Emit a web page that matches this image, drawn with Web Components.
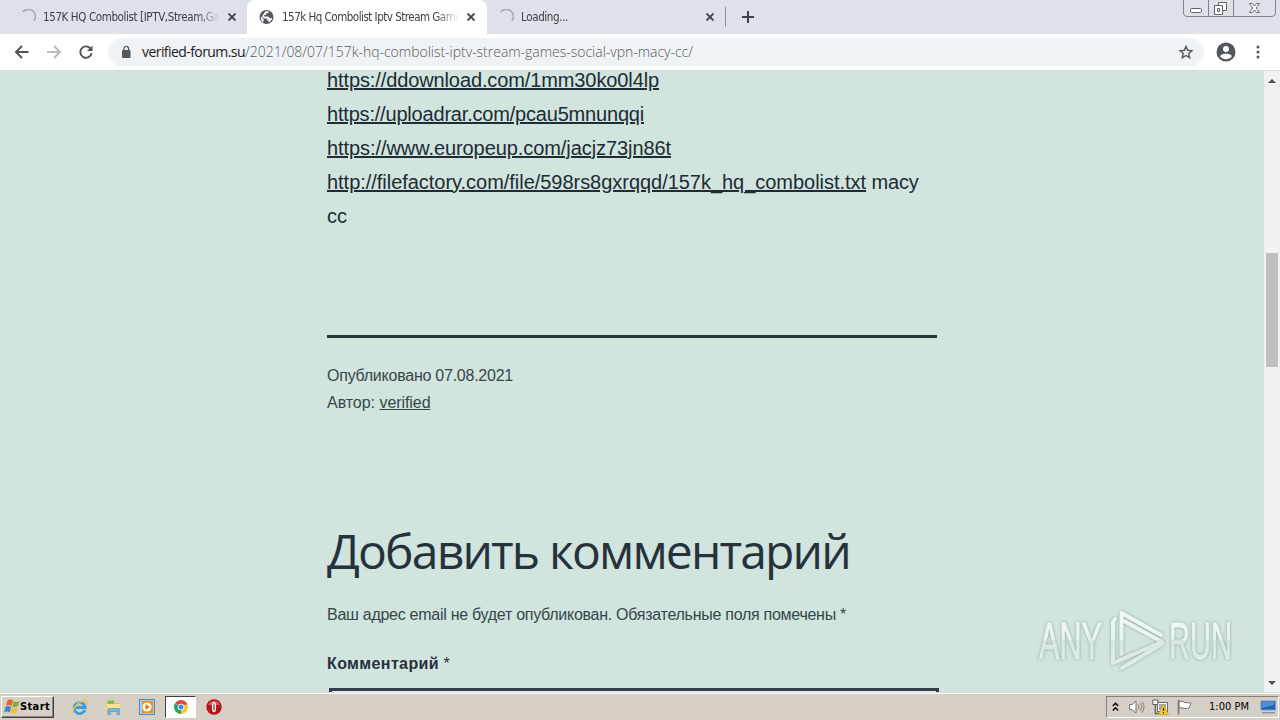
<!DOCTYPE html>
<html lang="ru">
<head>
<meta charset="utf-8">
<title>157k Hq Combolist</title>
<style>
  html, body { margin: 0; height: 100%; overflow: hidden; }
  body {
    display: flex;
    flex-direction: column;
    width: 1280px;
    height: 720px;
    background: #d1e4dd;
    font-family: "Liberation Sans", Arial, sans-serif;
  }
</style>
</head>
<body>
<tab-strip>
  <browser-tab state="loading" size="first"><fit-text width="186">157K HQ Combolist [IPTV,Stream,Gam</fit-text></browser-tab>
  <browser-tab state="ready" size="active"><fit-text width="184">157k Hq Combolist Iptv Stream Games</fit-text></browser-tab>
  <browser-tab state="loading" size="last"><fit-text width="47">Loading...</fit-text></browser-tab>
</tab-strip>
<address-bar>
  <fit-text slot="host" width="103">verified-forum.su</fit-text>
  <fit-text slot="path" width="448">/2021/08/07/157k-hq-combolist-iptv-stream-games-social-vpn-macy-cc/</fit-text>
</address-bar>
<page-view>
  <blog-post>
    <text-link><fit-text width="332">https://ddownload.com/1mm30ko0l4lp</fit-text></text-link><br>
    <text-link><fit-text width="317">https://uploadrar.com/pcau5mnunqqi</fit-text></text-link><br>
    <text-link><fit-text width="344">https://www.europeup.com/jacjz73jn86t</fit-text></text-link><br>
    <text-link><fit-text width="539">http://filefactory.com/file/598rs8gxrqqd/157k_hq_combolist.txt</fit-text></text-link> <fit-text width="47">macy</fit-text><br>
    <fit-text width="20">cc</fit-text>
  </blog-post>
  <post-meta>
    <fit-text slot="date" width="186">Опубликовано 07.08.2021</fit-text>
    <fit-text slot="label" width="48">Автор:</fit-text>
    <text-link slot="author"><fit-text width="51">verified</fit-text></text-link>
  </post-meta>
  <comment-form>
    <fit-text slot="title" width="523">Добавить комментарий</fit-text>
    <fit-text slot="note" width="519">Ваш адрес email не будет опубликован. Обязательные поля помечены *</fit-text>
    <fit-text slot="label" width="112">Комментарий</fit-text>
  </comment-form>
  <water-mark slot="overlay"></water-mark>
</page-view>
<task-bar>
  <fit-text slot="start" width="30">Start</fit-text>
  <fit-text slot="clock" width="40">1:00 PM</fit-text>
</task-bar>

<script>
// Spreads its text over a set width by adjusting the letter spacing.
class FitText extends HTMLElement {
  constructor() {
    super();
    this.attachShadow({ mode: "open" });
    this.shadowRoot.innerHTML = `
      <style>
        :host { display: inline; white-space: pre; }
        span { display: inline; }
      </style>
      <span><slot></slot></span>
    `.replace(/>\s+</g, "><").trim();
  }

  connectedCallback() {
    requestAnimationFrame(() => this.fit());
  }

  fit() {
    const span = this.shadowRoot.querySelector("span");
    const target = Number(this.getAttribute("width"));
    const natural = span.getBoundingClientRect().width;
    if (!target || !natural) return;
    span.style.letterSpacing = `${(target - natural) / this.textContent.length}px`;
  }
}

class TextLink extends HTMLElement {
  constructor() {
    super();
    this.attachShadow({ mode: "open" });
    this.shadowRoot.innerHTML = `<style>
      :host { display: inline; text-decoration: underline; text-decoration-skip-ink: auto; cursor: pointer; }
    </style><slot></slot>`;
  }
}

class TabStrip extends HTMLElement {
  constructor() {
    super();
    this.attachShadow({ mode: "open" });
    this.shadowRoot.innerHTML = `
      <style>
        :host { display: flex; flex: none; height: 34px; background: #dee1e8; color: #3c4043; }
        .new { display: flex; align-items: center; height: 34px; }
        .new i { width: 1px; height: 20px; background: #8d9197; }
        .new svg { margin-left: 16px; }
        .controls { margin-left: auto; margin-right: 4px; }
        svg { display: block; }
      </style>
      <slot></slot>
      <div class="new">
        <i></i>
        <svg width="12" height="12" viewBox="0 0 12 12"><path d="M6 0v12M0 6h12" stroke="#3c4043" stroke-width="2"/></svg>
      </div>
      <svg class="controls" width="93" height="18" viewBox="0 0 93 18" fill="none">
        <path d="M.5 0v13q0 3.500 3.500 3.500h85q3.500 0 3.500-3.500V0M25.500 0v16M50.500 0v16" stroke="#7f858e"/>
        <rect x="7.500" y="8.500" width="11" height="4" rx="1" fill="#fff" stroke="#5d626b"/>
        <path d="M35.500 2.500h8v8h-8z" fill="#fff" stroke="#5d626b"/>
        <path d="M31.500 5.500h8v9h-8z" fill="#fff" stroke="#5d626b"/>
        <path d="M34.500 8.500h2v3h-2z" stroke="#5d626b"/>
        <path d="M66.500 3.500h3l2 2.500 2-2.500h3l-3.200 4.500 3.200 4.500h-3l-2-2.500-2 2.500h-3l3.200-4.500z" fill="#fff" stroke="#6c7179"/>
      </svg>
    `;
  }
}

class BrowserTab extends HTMLElement {
  constructor() {
    super();
    this.attachShadow({ mode: "open" });
    const loading = this.getAttribute("state") === "loading";
    const icon = loading
      ? `<path d="M2.800 3A7 7 0 0 1 13.800 11.800" fill="none" stroke="#a5a9b0" stroke-width="1.600"/>`
      : `<circle cx="7.500" cy="8" r="7" fill="#55595e"/>
         <path d="M2 7.500 4.500 9.800v3.500C2.100 12.500 1.400 9.500 2 7.500zM6.500 2.300h3.300l-.6 2H7V6H5.100v1.600h4.200l1.200 1.500h2.600c-.3 2.200-1.700 3.700-3.500 4.300V11.500H8V9.500H5.100L3 7.300z" fill="#fff"/>`;
    this.shadowRoot.innerHTML = `
      <style>
        :host {
          display: flex;
          box-sizing: border-box;
          align-items: center;
          height: 34px;
          padding-left: 20px;
          font: 11.500px/16px "DejaVu Sans Condensed", "DejaVu Sans", sans-serif;
          font-stretch: condensed;
        }
        :host([size="first"]) { width: 247px; border-radius: 0 0 8px 0; }
        :host([size="active"]) { width: 240px; padding-left: 12px; background: #fff; border-radius: 8px 8px 0 0; }
        :host([size="last"]) { width: 238px; padding-left: 11px; }
        .icon { flex: none; margin-right: 7px; }
        .title { flex: none; width: 177px; overflow: hidden; white-space: nowrap;
          -webkit-mask: linear-gradient(90deg, #000 154px, transparent 177px); }
        .close { flex: none; margin-left: 8px; }
        :host([size="last"]) .title { width: 179px; }
        :host([size="last"]) .close { margin-left: 6px; }
      </style>
      <svg class="icon" width="16" height="16" viewBox="0 0 16 16">${icon}</svg>
      <div class="title"><slot></slot></div>
      <svg class="close" width="8" height="8" viewBox="0 0 8 8"><path d="M.5.5l7 7M7.500.5l-7 7" stroke="#3f4246" stroke-width="1.900"/></svg>
    `;
  }
}

class AddressBar extends HTMLElement {
  constructor() {
    super();
    this.attachShadow({ mode: "open" });
    this.shadowRoot.innerHTML = `
      <style>
        :host { display: flex; flex: none; box-sizing: border-box; align-items: center; height: 37px; padding-left: 14px; background: #fff; border-bottom: 1px solid #d5dedb; }
        svg { flex: none; display: block; }
        .back { margin-right: 16px; }
        .forward { margin-right: 16px; }
        .field { display: flex; box-sizing: border-box; align-items: center; width: 1096px; height: 28px; margin-left: 14px; padding: 0 10px 0 12px; border-radius: 14px; background: #f0f3f5; }
        .url { flex: 1; margin-left: 10px; font: 14px/20px "Open Sans", "Noto Sans", sans-serif; font-weight: 300; white-space: nowrap; color: #55595e; }
        .host { color: #202124; font-weight: 400; }
        .user { margin-left: 12px; }
        .menu { margin-left: 20px; }
      </style>
      <svg class="back" width="16" height="16" viewBox="0 0 16 16"><path d="M14.500 8H2.200M8 2L2 8l6 6" fill="none" stroke="#4f5358" stroke-width="1.900"/></svg>
      <svg class="forward" width="16" height="16" viewBox="0 0 16 16"><path d="M1 8h12.800M8 2l6 6-6 6" fill="none" stroke="#b9bbbe" stroke-width="1.900"/></svg>
      <svg width="16" height="16" viewBox="0 0 16 16"><path d="M12.300 4.300A5.700 5.700 0 1 0 13.600 9.300" fill="none" stroke="#4f5358" stroke-width="1.900"/><path d="M14.500 1.500v5.500H9z" fill="#4f5358"/></svg>
      <div class="field">
        <svg width="12" height="14" viewBox="0 0 12 14"><rect x="2" y="5" width="8.500" height="8" rx="1" fill="#54585d"/><path d="M3.900 5.500V3.800a2.350 2.350 0 0 1 4.700 0V5.500" fill="none" stroke="#54585d" stroke-width="1.300"/></svg>
        <div class="url"><span class="host"><slot name="host"></slot></span><slot name="path"></slot></div>
        <svg width="16" height="16" viewBox="0 0 16 16"><path d="M8 2.400l1.700 3.900 4.200.4-3.200 2.800 1 4.200L8 11.500l-3.700 2.200 1-4.200-3.200-2.800 4.200-.4z" fill="none" stroke="#54585d" stroke-width="1.400"/></svg>
      </div>
      <svg class="user" width="20" height="20" viewBox="0 0 20 20"><circle cx="10" cy="10" r="9.500" fill="#54585d"/><circle cx="10" cy="7" r="3" fill="#fff"/><path d="M4 14.200C5 12 8 11.700 10 11.700s5 .3 6 2.500c-1.500 2-3.700 3-6 3s-4.500-1-6-3z" fill="#fff"/></svg>
      <svg class="menu" width="4" height="14" viewBox="0 0 4 14" fill="#54585d"><circle cx="2" cy="2" r="1.500"/><circle cx="2" cy="7" r="1.500"/><circle cx="2" cy="12" r="1.500"/></svg>
    `;
  }
}

class PageView extends HTMLElement {
  constructor() {
    super();
    this.attachShadow({ mode: "open" });
    this.shadowRoot.innerHTML = `
      <style>
        :host { display: flex; position: relative; flex: none; height: 621px; overflow: hidden; background: #d1e4dd; color: #28303d; }
        main { box-sizing: border-box; width: 1264px; height: 621px; padding-left: 327px; overflow: hidden; }
        aside { display: flex; flex-direction: column; align-items: center; box-sizing: border-box; width: 16px; height: 621px; padding: 8px 0 7px; background: #f1f1f1; }
        .thumb { width: 12px; height: 114px; margin: 170px 0 auto; background: #bfbfbf; }
        svg { display: block; flex: none; }
      </style>
      <main><slot></slot></main>
      <aside>
        <svg width="8" height="4" viewBox="0 0 8 4"><path d="M0 4l4-4 4 4z" fill="#505050"/></svg>
        <div class="thumb"></div>
        <svg width="8" height="4" viewBox="0 0 8 4"><path d="M0 0l4 4 4-4z" fill="#505050"/></svg>
      </aside>
      <slot name="overlay"></slot>
    `;
  }
}

class BlogPost extends HTMLElement {
  constructor() {
    super();
    this.attachShadow({ mode: "open" });
    this.shadowRoot.innerHTML = `
      <style>
        :host { display: block; width: 610px; height: 272px; margin-top: -8px; border-bottom: 3px solid #28353b; font-size: 20px; line-height: 34px; white-space: nowrap; color: #202b34; }
      </style>
      <slot></slot>
    `;
  }
}

class PostMeta extends HTMLElement {
  constructor() {
    super();
    this.attachShadow({ mode: "open" });
    this.shadowRoot.innerHTML = `
      <style>
        :host { display: block; padding-top: 24px; font-size: 16px; line-height: 27px; color: #38464b; }
      </style>
      <div><slot name="date"></slot></div>
      <div><slot name="label"></slot> <slot name="author"></slot></div>
    `;
  }
}

class CommentForm extends HTMLElement {
  constructor() {
    super();
    this.attachShadow({ mode: "open" });
    this.shadowRoot.innerHTML = `
      <style>
        :host { display: block; padding-top: 104px; font-size: 16px; line-height: 27px; }
        h2 { margin: 0; font: 48px/62px "Open Sans", "Noto Sans", sans-serif; white-space: nowrap; color: #26323b; }
        p { margin: 19px 0 22px; color: #38464b; white-space: nowrap; }
        .label { font-weight: 700; }
        .area { box-sizing: border-box; width: 610px; height: 180px; margin: 11px 0 0 2px; border: 3px solid #323d49; background: #e9f3ef; }
      </style>
      <h2><slot name="title"></slot></h2>
      <p><slot name="note"></slot></p>
      <div><span class="label"><slot name="label"></slot></span> <span>*</span></div>
      <div class="area"></div>
    `;
  }
}

class WaterMark extends HTMLElement {
  constructor() {
    super();
    this.attachShadow({ mode: "open" });
    this.shadowRoot.innerHTML = `
      <style>
        :host { display: block; position: absolute; right: 30px; bottom: 14px; width: 218px; height: 74px; }
        svg { display: block; overflow: visible; filter: drop-shadow(0 0 1.500px rgba(90, 115, 108, .55)); }
        text { font-family: "Liberation Sans", Arial, sans-serif; font-size: 51px; }
      </style>
      <svg width="218" height="74" viewBox="1032 604 218 74">
        <defs>
          <linearGradient id="shine" gradientUnits="userSpaceOnUse" x1="0" y1="610" x2="0" y2="670">
            <stop offset="0" stop-color="#f0f8f5"/><stop offset=".49" stop-color="#e9f4f0"/>
            <stop offset=".5" stop-color="#d9e7e2"/><stop offset="1" stop-color="#e2eeea"/>
          </linearGradient>
        </defs>
        <g fill="url(#shine)" stroke="url(#shine)" stroke-width="1">
          <text x="1039" y="659" textLength="63" lengthAdjust="spacingAndGlyphs">ANY</text>
          <text x="1169" y="659" textLength="63" lengthAdjust="spacingAndGlyphs">RUN</text>
        </g>
        <g fill="none" stroke="url(#shine)" stroke-width="4" stroke-linecap="round" stroke-linejoin="round">
          <path d="M1121.500 654V613L1161 635"/>
          <path d="M1115 619l-2 3v41l49-21-38-21"/>
          <path d="M1122 668l40-24"/>
        </g>
      </svg>
    `;
  }
}

class TaskBar extends HTMLElement {
  constructor() {
    super();
    this.attachShadow({ mode: "open" });
    this.shadowRoot.innerHTML = `
      <style>
        :host { display: flex; flex: none; box-sizing: border-box; align-items: center; height: 28px; padding: 1px 1px 0 1px; border-top: 1px solid #dcdad5; box-shadow: inset 0 1px #fff; background: #d6cfc5; color: #000; }
        svg { display: block; flex: none; }
        .start { display: flex; box-sizing: border-box; align-items: center; width: 53px; height: 22px; padding-left: 2px; border: 1px solid; border-color: #fff #404040 #404040 #fff; box-shadow: inset -1px -1px #8a8680; font: bold 11px/16px "DejaVu Sans Condensed", "DejaVu Sans", sans-serif; font-stretch: condensed; }
        .quick { display: flex; align-items: center; margin-left: 17px; }
        .quick > svg { margin-right: 18px; }
        .quick .active { display: flex; align-items: center; justify-content: center; box-sizing: border-box; width: 31px; height: 22px; margin: 0 10px 0 -8px; border: 1px solid; border-color: #404040 #fff #fff #404040; background: #fff; }
        .active svg { margin: 0; }
        .tray { display: flex; box-sizing: border-box; align-items: center; width: 173px; height: 22px; margin-left: auto; padding-left: 5px; border: 1px solid; border-color: #85817b #fff #fff #85817b; font: 11px/16px "DejaVu Sans Condensed", "DejaVu Sans", sans-serif; font-stretch: condensed; }
        .clock { width: 42px; margin: 0 9px 0 16px; white-space: nowrap; }
      </style>
      <div class="start">
        <svg width="16" height="16" viewBox="0 0 16 16">
          <path d="M3.500 1.500q3-2 5.500 0L7.500 7Q5 5.200 2 6.800z" fill="#e9602c"/>
          <path d="M9.800 2.200q3 1.500 6-.3l-1.600 5.200q-3 1.800-6 .3z" fill="#78b43c"/>
          <path d="M1.600 7.700q3-1.500 5.600.3L5.700 13.500q-3-2-5.700-.3z" fill="#3f83cf"/>
          <path d="M8 8.500q3 1.500 6-.3l-1.600 5.300q-3 1.800-6 .3z" fill="#f3bd2e"/>
        </svg>
        <slot name="start"></slot>
      </div>
      <div class="quick">
        <svg width="17" height="16" viewBox="0 0 17 16">
          <path d="M13.900 11A5.500 5.500 0 1 1 14.200 8.500H4.500" fill="none" stroke="#3a9ddd" stroke-width="2.800"/>
          <path d="M2 14.800C-.5 12.500 6 3.500 12.500 1.500c4-1 3.500 2 2.500 3.500" fill="none" stroke="#edc44c" stroke-width="1.500"/>
        </svg>
        <svg style="margin-left:-1px" width="16" height="16" viewBox="0 0 16 16">
          <path d="M1 2.500h5L7 4h7.500v9H1z" fill="#e8c45c"/><path d="M3 1.500h6v4H3z" fill="#7dbb55"/><path d="M1.500 5h13.500v6H1.500z" fill="#f8e392"/>
          <path d="M3 15.500V9.500h11.500v6h-2.500v-3H5.500v3z" fill="#77b7df" stroke="#4e91bd" stroke-width=".6"/>
        </svg>
        <svg width="16" height="16" viewBox="0 0 16 16">
          <rect x=".5" y=".5" width="15" height="15" fill="#a8cff0" stroke="#5188bd"/><rect x="3" y="2" width="11" height="12" fill="#f08e20"/><circle cx="8" cy="8" r="4.600" fill="#fff"/><path d="M6.500 5l4.500 3-4.500 3z" fill="#e67614"/>
        </svg>
        <div class="active">
          <svg width="14" height="14" viewBox="0 0 14 14">
            <path d="M7 7L.94 3.500A7 7 0 0 1 13.060 3.500z" fill="#df4936"/><path d="M7 7l6.060-3.500A7 7 0 0 1 7 14z" fill="#f7c92d"/><path d="M7 7v7A7 7 0 0 1 .94 3.500z" fill="#2ba352"/>
            <path d="M7 3.500h6.060l.5 1H7z" fill="#df4936"/><circle cx="7" cy="7" r="3.300" fill="#fff"/><circle cx="7" cy="7" r="2.500" fill="#4384e8"/>
          </svg>
        </div>
        <svg width="16" height="16" viewBox="0 0 16 16"><circle cx="8" cy="8" r="7.700" fill="#b3151c"/><path d="M2 6a6.500 6.500 0 0 1 12 0z" fill="#d9595c"/><ellipse cx="8" cy="8" rx="2.100" ry="5.300" fill="#fff"/><ellipse cx="8" cy="8" rx=".6" ry="4" fill="#8e1016"/></svg>
      </div>
      <div class="tray">
        <svg width="7" height="10" viewBox="0 0 7 10"><path d="M.8 4L3.500 1.300 6.200 4M.8 8.500l2.700-2.700 2.700 2.700" fill="none" stroke="#000" stroke-width="1.400"/></svg>
        <svg style="margin-left:9px" width="17" height="16" viewBox="0 0 17 16"><path d="M1.500 5.500h2.500L8 2v12l-4-3.500H1.500z" fill="#fff" stroke="#77736e"/><path d="M10 5.500q2 2.500 0 5M12 4q3.500 4 0 8M14 2.500q4 5.500 0 11" fill="none" stroke="#85817c"/></svg>
        <svg style="margin-left:7px" width="17" height="16" viewBox="0 0 17 16"><rect x="5.500" y="3.500" width="10" height="9" fill="#fff" stroke="#6f6c68"/><path d="M7 5h7v6H7z" fill="#aaa8a4"/><path d="M.8 1h5v4.500h-5z" fill="#fff" stroke="#625f5b"/><path d="M3.300 5.500v9h4" fill="none" stroke="#625f5b" stroke-width="1.300"/><path d="M11.500 6l5 9.500h-10z" fill="#f5cc29" stroke="#c09817" stroke-width=".6"/><path d="M11.500 9v3M11.500 13v1.200" stroke="#222" stroke-width="1.200"/></svg>
        <svg style="margin-left:7px" width="17" height="16" viewBox="0 0 17 16"><path d="M3 2.500q3-1 6 1l6 .500-2 5-5 .5q-2-1.500-5-.5z" fill="#fff" stroke="#77736e"/><path d="M2.500 1v14.500" stroke="#77736e" stroke-width="1.500"/></svg>
        <div class="clock"><slot name="clock"></slot></div>
        <svg width="17" height="14" viewBox="0 0 17 14"><path d="M1 1h14.500v9H1z" fill="#2461b0" stroke="#729cc9"/><path d="M2 2h12v3L2 8z" fill="#4a91dc"/><path d="M2 12h13v1.500H2z" fill="#8397ab"/></svg>
      </div>
    `;
  }
}

customElements.define("fit-text", FitText);
customElements.define("text-link", TextLink);
customElements.define("tab-strip", TabStrip);
customElements.define("browser-tab", BrowserTab);
customElements.define("address-bar", AddressBar);
customElements.define("page-view", PageView);
customElements.define("blog-post", BlogPost);
customElements.define("post-meta", PostMeta);
customElements.define("comment-form", CommentForm);
customElements.define("water-mark", WaterMark);
customElements.define("task-bar", TaskBar);
</script>
</body>
</html>
